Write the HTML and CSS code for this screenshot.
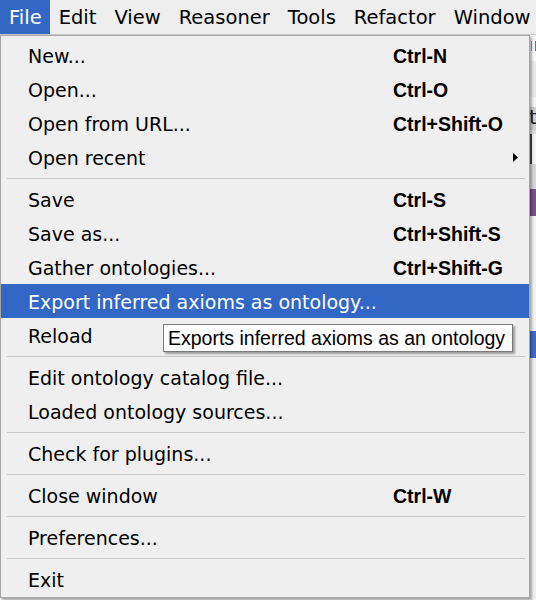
FILE: index.html
```html
<!DOCTYPE html>
<html>
<head>
<meta charset="utf-8">
<link rel="stylesheet" href="styles.css">
</head>
<body>
<div class="menubar">
  <div class="mb-item active">File</div>
  <div class="mb-item">Edit</div>
  <div class="mb-item">View</div>
  <div class="mb-item">Reasoner</div>
  <div class="mb-item">Tools</div>
  <div class="mb-item">Refactor</div>
  <div class="mb-item">Window</div>
</div>
<div class="app">
  <div class="band b-field"><span class="caret"></span></div>
  <div class="band b-plain1"></div>
  <div class="band b-line"></div>
  <div class="band b-tab">t</div>
  <div class="band b-gap"></div>
  <div class="band b-box"></div>
  <div class="band b-gray"></div>
  <div class="band b-purple"></div>
  <div class="band b-plain2"></div>
  <div class="band b-blue"></div>
</div>
<div class="menu">
  <div class="item"><span class="label">New...</span><span class="key">Ctrl-N</span></div>
  <div class="item"><span class="label">Open...</span><span class="key">Ctrl-O</span></div>
  <div class="item"><span class="label">Open from URL...</span><span class="key">Ctrl+Shift-O</span></div>
  <div class="item"><span class="label">Open recent</span><span class="key"></span><svg class="arrow" width="5" height="9" viewBox="0 0 5 9"><path d="M0 0 L5 4.5 L0 9 Z" fill="#000"/></svg></div>
  <div class="sep"></div>
  <div class="item"><span class="label">Save</span><span class="key">Ctrl-S</span></div>
  <div class="item"><span class="label">Save as...</span><span class="key">Ctrl+Shift-S</span></div>
  <div class="item"><span class="label">Gather ontologies...</span><span class="key">Ctrl+Shift-G</span></div>
  <div class="item selected"><span class="label">Export inferred axioms as ontology...</span><span class="key"></span></div>
  <div class="item"><span class="label">Reload</span><span class="key"></span></div>
  <div class="sep"></div>
  <div class="item"><span class="label">Edit ontology catalog file...</span><span class="key"></span></div>
  <div class="item"><span class="label">Loaded ontology sources...</span><span class="key"></span></div>
  <div class="sep"></div>
  <div class="item"><span class="label">Check for plugins...</span><span class="key"></span></div>
  <div class="sep"></div>
  <div class="item"><span class="label">Close window</span><span class="key">Ctrl-W</span></div>
  <div class="sep"></div>
  <div class="item"><span class="label">Preferences...</span><span class="key"></span></div>
  <div class="sep"></div>
  <div class="item"><span class="label">Exit</span><span class="key"></span></div>
</div>
<div class="tooltip">Exports inferred axioms as an ontology</div>
</body>
</html>
```
FILE: styles.css
```css
html, body {
  margin: 0;
  padding: 0;
}
body {
  width: 536px;
  height: 600px;
  overflow: hidden;
  background: #eeeeee;
  font-family: "DejaVu Sans", sans-serif;
  font-size: 19px;
  color: #000;
  position: relative;
}
.menubar {
  display: flex;
  height: 34px;
  border-bottom: 1px solid #c8c8c8;
  background: #eeeeee;
  white-space: nowrap;
  font-size: 19.5px;
  overflow: hidden;
}
.mb-item {
  padding: 0 9px;
  line-height: 35px;
  flex: none;
}
.mb-item.active {
  background: #3367c5;
  color: #fff;
  padding-right: 8px;
}
.app {
  display: flex;
  flex-direction: column;
  align-items: flex-end;
}
.band {
  width: 6px;
  flex: none;
  overflow: hidden;
  font-size: 20px;
  line-height: 1;
}
.b-field { height: 26px; background: #f6f6f6; padding-top: 6px; box-sizing: border-box; }
.b-field .caret { display: block; width: 3px; height: 10px; margin-left: 1px; border-left: 1px solid #c89a30; border-right: 1px solid #5070b0; }
.b-plain1 { height: 36px; background: #e9e9e9; }
.b-line { height: 10px; background: #f2f2f2; }
.b-tab { height: 23px; background: #cfcfcf; color: #222; text-indent: -1px; }
.b-gap { height: 4px; background: #e0e0e0; }
.b-box { height: 30px; background: #f4f4f4; border-left: 2px solid #444; box-sizing: border-box; }
.b-gray { height: 25px; background: #d6d6d6; }
.b-purple { height: 27px; background: #7b4b8c; }
.b-plain2 { height: 115px; background: #f0f0f0; }
.b-blue { height: 27px; background: #3a6cc4; }

.menu {
  position: absolute;
  left: 0;
  top: 35px;
  width: 528px;
  border: 1px solid #a6a6a6;
  background: #efefef;
  padding: 2px 0 1px;
  box-shadow: 2px 2px 2px rgba(0, 0, 0, 0.3);
}
.item {
  display: grid;
  grid-template-columns: 365px 1fr 16px;
  align-items: center;
  height: 34px;
  box-sizing: border-box;
  padding: 2px 10px 0 27px;
  white-space: nowrap;
}
.item.selected {
  background: #3367c5;
  color: #fff;
}
.key {
  font-family: "Liberation Sans", Arial, sans-serif;
  font-weight: bold;
  font-size: 19.5px;
}
.arrow {
  justify-self: end;
  margin-right: 1px;
  margin-top: -2px;
}
.sep {
  height: 8px;
  display: flex;
  align-items: center;
  padding: 0 4px 0 6px;
}
.sep::before {
  content: "";
  flex: 1;
  height: 1px;
  background: #c6c6c6;
}
.tooltip {
  position: absolute;
  left: 163px;
  top: 324px;
  width: 344px;
  height: 26px;
  padding-left: 4px;
  border: 1px solid #7a7a7a;
  background: #fdfdfd;
  font-family: "Liberation Sans", Arial, sans-serif;
  font-size: 19.5px;
  line-height: 27px;
  white-space: nowrap;
  box-shadow: 2px 2px 2px rgba(0, 0, 0, 0.35);
}
```
